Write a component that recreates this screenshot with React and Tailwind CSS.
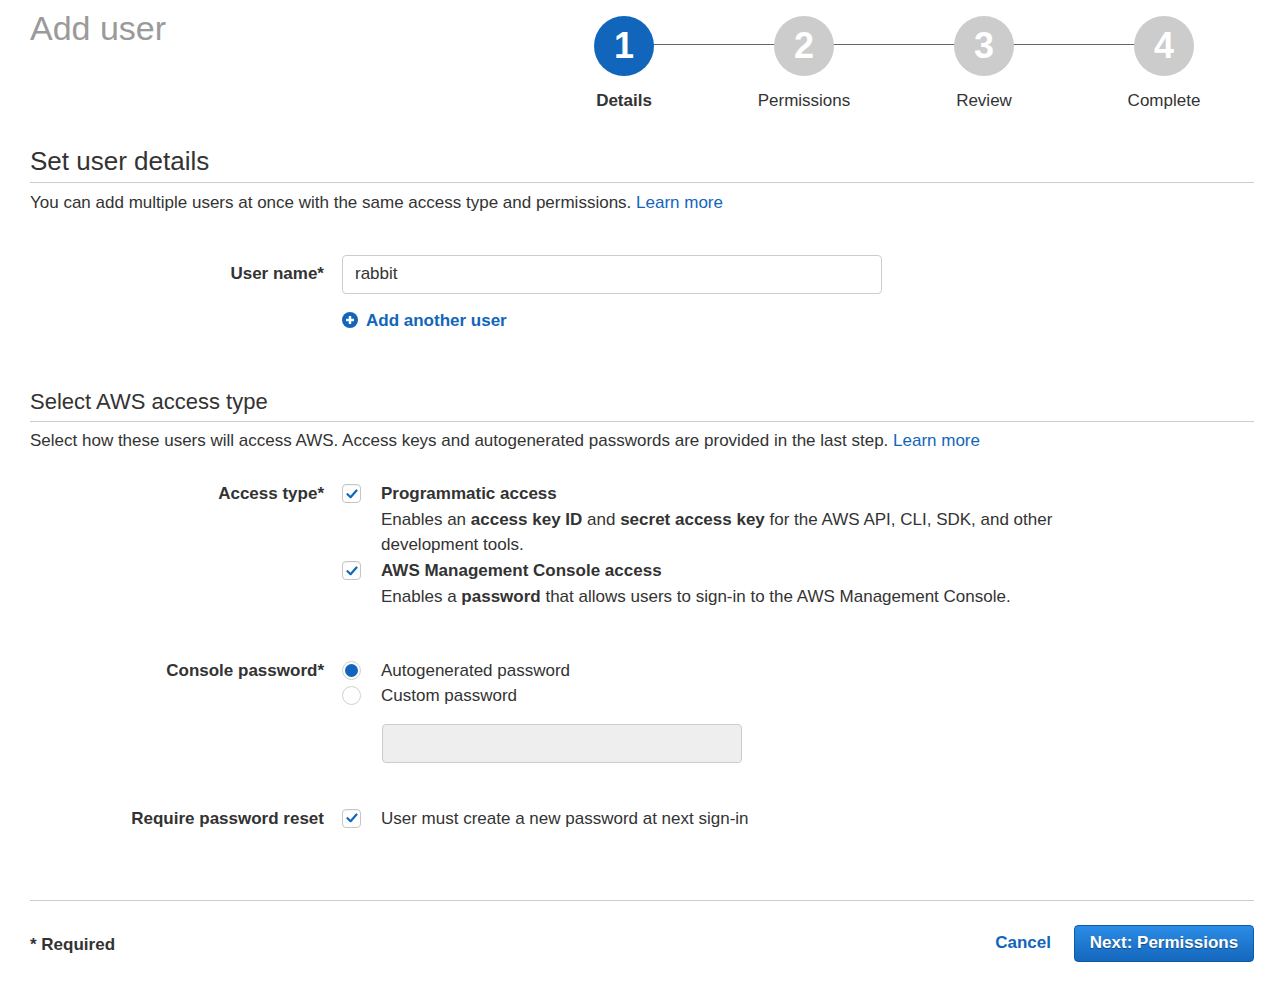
import React from 'react';

const steps = [
  { n: '1', label: 'Details', active: true },
  { n: '2', label: 'Permissions' },
  { n: '3', label: 'Review' },
  { n: '4', label: 'Complete' },
];

function Check() {
  return (
    <span className="w-[19px] h-[19px] shrink-0 rounded-[4px] border border-[#c6c6c6] bg-white flex items-center justify-center shadow-[inset_0_1px_1px_rgba(0,0,0,0.05)]">
      <svg width="12" height="10" viewBox="0 0 12 10">
        <path d="M1.5 5.2 L4.6 8.2 L10.5 1.5" fill="none" stroke="#1166bb" strokeWidth="2.2" strokeLinecap="round" strokeLinejoin="round" />
      </svg>
    </span>
  );
}

function Radio({ on }) {
  return (
    <span className="w-[19px] h-[19px] shrink-0 rounded-full border border-[#d0d0d0] bg-white flex items-center justify-center">
      {on && <span className="w-[13px] h-[13px] rounded-full bg-[#1166bb]" />}
    </span>
  );
}

function Row({ label, children, className = '' }) {
  return (
    <div className={`flex ${className}`}>
      <div className="w-[294px] shrink-0 text-right font-bold text-[#333]">{label}</div>
      <div className="ml-[18px] flex-1">{children}</div>
    </div>
  );
}

export default function App() {
  return (
    <div className="w-[1286px] min-h-[982px] bg-white text-[17px] text-[#333] pl-[30px] pr-[32px]" style={{ fontFamily: '"Liberation Sans", Arial, sans-serif' }}>
      {/* HEADER + STEPS */}
      <div className="flex justify-between">
        <h1 className="text-[34px] leading-none text-[#9a9a9a] pt-[11px]">Add user</h1>
        <div className="relative flex pt-[16px]">
          <div className="absolute top-[44px] left-[90px] right-[90px] h-px bg-[#666]" />
          {steps.map(s => (
            <div key={s.n} className="relative w-[180px] flex flex-col items-center">
              <div className={`w-[60px] h-[60px] rounded-full flex items-center justify-center text-white font-bold text-[36px] ${s.active ? 'bg-[#1166bb]' : 'bg-[#cccccc]'}`}>{s.n}</div>
              <div className={`mt-[12px] text-[17px] ${s.active ? 'font-bold text-[#333]' : 'text-[#333]'}`}>{s.label}</div>
            </div>
          ))}
        </div>
      </div>

      {/* SET USER DETAILS */}
      <h2 className="mt-[31px] text-[26px] leading-[32px] text-[#333]">Set user details</h2>
      <div className="mt-[5px] h-px bg-[#cccccc]" />
      <p className="mt-[9px] leading-[22px]">You can add multiple users at once with the same access type and permissions. <span className="text-[#1166bb]">Learn more</span></p>

      <Row label="User name*" className="mt-[41px] items-center">
        <div className="w-[540px] h-[39px] border border-[#cccccc] rounded-[4px] flex items-center px-[12px]">rabbit</div>
      </Row>
      <Row label="" className="mt-[14px]">
        <div className="flex items-center gap-[8px] text-[#1166bb] font-bold text-[17px]">
          <svg width="16" height="16" viewBox="0 0 16 16">
            <circle cx="8" cy="8" r="8" fill="#1166bb" />
            <path d="M8 4v8M4 8h8" stroke="white" strokeWidth="2.4" />
          </svg>
          Add another user
        </div>
      </Row>

      {/* ACCESS TYPE */}
      <h2 className="mt-[54px] text-[22px] leading-[30px] text-[#333]">Select AWS access type</h2>
      <div className="mt-[4px] h-px bg-[#cccccc]" />
      <p className="mt-[8px] leading-[22px]">Select how these users will access AWS. Access keys and autogenerated passwords are provided in the last step. <span className="text-[#1166bb]">Learn more</span></p>

      <Row label="Access type*" className="mt-[29px] leading-[25.7px]">
        <div className="flex gap-[20px]">
          <div className="pt-[3px]"><Check /></div>
          <div className="w-[700px]">
            <div className="font-bold">Programmatic access</div>
            <div>Enables an <b>access key ID</b> and <b>secret access key</b> for the AWS API, CLI, SDK, and other development tools.</div>
          </div>
        </div>
        <div className="flex gap-[20px]">
          <div className="pt-[3px]"><Check /></div>
          <div>
            <div className="font-bold">AWS Management Console access</div>
            <div>Enables a <b>password</b> that allows users to sign-in to the AWS Management Console.</div>
          </div>
        </div>
      </Row>

      <Row label="Console password*" className="mt-[48px] leading-[25px]">
        <div className="flex items-center gap-[20px]"><Radio on /><span>Autogenerated password</span></div>
        <div className="flex items-center gap-[20px]"><Radio /><span>Custom password</span></div>
        <div className="ml-[40px] mt-[16px] w-[360px] h-[39px] rounded-[4px] border border-[#cccccc] bg-[#eeeeee]" />
      </Row>

      <Row label="Require password reset" className="mt-[43px] leading-[25px]">
        <div className="flex items-center gap-[20px]"><Check /><span>User must create a new password at next sign-in</span></div>
      </Row>

      {/* FOOTER */}
      <div className="mt-[69px] h-px bg-[#cccccc]" />
      <div className="flex items-center justify-between mt-[24px]">
        <div className="font-bold pt-[3px]">* Required</div>
        <div className="flex items-center gap-[23px]">
          <span className="font-bold text-[#1166bb] text-[17px]">Cancel</span>
          <button className="w-[180px] h-[37px] rounded-[4px] border border-[#0e5aa7] bg-gradient-to-b from-[#2b8ce6] to-[#1467bd] text-white font-bold text-[17px] [text-shadow:0_1px_1px_rgba(0,0,0,0.4)]">Next: Permissions</button>
        </div>
      </div>
    </div>
  );
}
